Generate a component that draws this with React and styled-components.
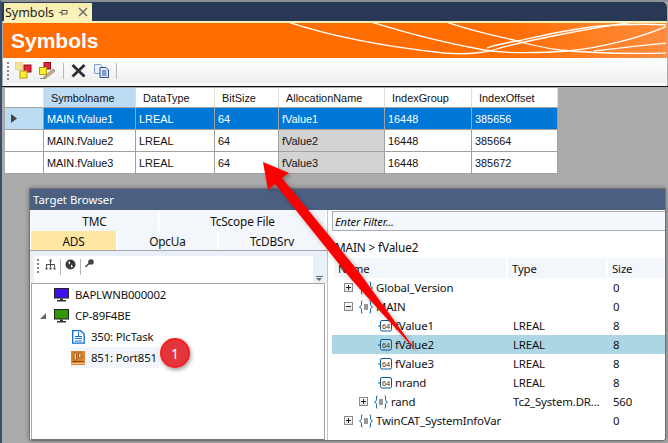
import styled, { createGlobalStyle } from "styled-components";

const GlobalStyle = createGlobalStyle`
  html, body {
    margin: 0;
    padding: 0;
    overflow: hidden;
    background: #ababab;
  }
`;

const Page = styled.div`
  position: relative;
  width: 668px;
  height: 443px;
  overflow: hidden;
  display: flex;
  flex-direction: column;
  box-sizing: border-box;
  background: #ababab;
  border-top: 2px solid #8b8f96;
  border-left: 2px solid #3c4c6c;
`;

const TitleStrip = styled.div`
  height: 19px;
  margin-right: 1px;
  display: flex;
  align-items: flex-end;
  padding-left: 2px;
  background: #293955;
  border-top-right-radius: 5px;
`;

const DocTab = styled.div`
  width: 88px;
  height: 18px;
  box-sizing: border-box;
  padding: 0 4px 0 1px;
  display: flex;
  align-items: center;
  background: linear-gradient(#f6eeb0, #fdf5bd);
  font: 12.5px "Noto Sans", sans-serif;
  color: #222;
`;

const TabName = styled.span`
  flex: 1;
  letter-spacing: -0.05px;
`;

const Banner = styled.div`
  position: relative;
  height: 35px;
  margin-right: 1px;
  margin-left: 1px;
  border-top: 2px solid #fdf3b4;
  display: flex;
  align-items: center;
  padding-left: 8px;
  background: linear-gradient(90deg, #ff6c00 0%, #ff6c00 75%, #ff8d3e 100%);
`;

const BannerTitle = styled.h1`
  margin: 0;
  font: bold 21px "Liberation Sans", sans-serif;
  color: #fff;
`;

const WaveArt = styled.svg`
  position: absolute;
  left: 0;
  top: 0;
`;

const Toolbar = styled.div`
  height: 25px;
  margin: 0 1px;
  padding-left: 4px;
  display: flex;
  align-items: center;
  background: linear-gradient(#fff, #efefef);
  border-bottom: 3px solid #f8f8f8;
`;

const Grip = styled.div`
  width: 2px;
  height: ${(p) => p.$h || 18}px;
  margin-right: ${(p) => p.$gap || 6}px;
  background: repeating-linear-gradient(#888 0 2px, transparent 2px 4px);
`;

const ToolSep = styled.div`
  width: 1px;
  height: 16px;
  margin: 0 ${(p) => p.$gap || 6}px;
  background: #b8b8b8;
`;

const ToolIcon = styled.svg`
  display: block;
  flex: none;
  margin-right: ${(p) => p.$gap || 0}px;
`;

const WorkArea = styled.div`
  flex: 1;
  min-height: 0;
  display: flex;
  flex-direction: column;
  align-items: flex-start;
  padding-top: 1px;
  padding-left: 3px;
  border-top: 1px solid #111;
  background: #ababab;
`;

const SymbolGrid = styled.div`
  display: grid;
  grid-template-columns: 39px 92px 79px 64px 106px 87px 86px;
  grid-template-rows: 20px repeat(3, 22px);
  font: 10.9px "Liberation Sans", sans-serif;
  background: #fff;
`;

const GridCell = styled.div`
  display: flex;
  align-items: center;
  box-sizing: border-box;
  padding-left: 3px;
  overflow: hidden;
  white-space: nowrap;
  border-right: 1px solid #a0a0a0;
  border-bottom: 1px solid #a0a0a0;
  color: ${(p) => (p.$selected ? "#fff" : "#111")};
  background: ${(p) =>
    p.$selected ? "#0078d7" : p.$computed ? "#d3d3d3" : "#fff"};
`;

const HeadCell = styled.div`
  display: flex;
  align-items: center;
  box-sizing: border-box;
  padding-left: 7px;
  white-space: nowrap;
  color: #111;
  border-right: 1px solid #dcdcdc;
  border-bottom: 1px solid #a0a0a0;
  background: ${(p) => (p.$active ? "#bcdcf4" : "#fff")};
`;

const RowHead = styled.div`
  display: flex;
  align-items: center;
  padding-left: 6px;
  box-sizing: border-box;
  border-right: 1px solid #a0a0a0;
  border-bottom: 1px solid #a0a0a0;
  background: ${(p) => (p.$current ? "#bcdcf4" : "#fff")};
`;

const GridRow = styled.div`
  display: contents;
`;

const BrowserWindow = styled.section`
  flex: 1;
  min-height: 0;
  align-self: stretch;
  margin: 14px 2px 2px 24px;
  display: flex;
  flex-direction: column;
  box-sizing: border-box;
  background: #fff;
  border: 1px solid #6f7378;
  border-radius: 0 0 3px 3px;
  box-shadow: 0 0 5px rgba(0, 0, 0, 0.35);
  font: 11.4px "Noto Sans", sans-serif;
  letter-spacing: -0.15px;
  color: #111;
`;

const BrowserTitle = styled.div`
  height: 21px;
  flex: none;
  display: flex;
  align-items: center;
  padding-left: 3px;
  padding-bottom: 1px;
  box-sizing: border-box;
  background: #4b5f81;
  color: #fff;
  font-size: 11.4px;
  letter-spacing: 0;
`;

const Panes = styled.div`
  flex: 1;
  min-height: 0;
  display: flex;
`;

const LeftPane = styled.div`
  width: 298px;
  flex: none;
  display: flex;
  flex-direction: column;
  box-sizing: border-box;
  border-right: 1px solid #c4c4c4;
`;

const TabRow = styled.div`
  height: ${(p) => p.$h}px;
  flex: none;
  display: grid;
  grid-template-columns: ${(p) => p.$cols};
  column-gap: 2px;
  padding-left: 1px;
`;

const TargetTab = styled.div`
  display: flex;
  align-items: center;
  justify-content: center;
  background: ${(p) => (p.$active ? "#ffe6a2" : "#f3f7fb")};
  font-size: 11.8px;
`;

const TreeFrame = styled.div`
  flex: 1;
  min-height: 0;
  display: flex;
  flex-direction: column;
  border-top: 1px solid #a6a6a6;
`;

const TreeToolArea = styled.div`
  height: 32px;
  flex: none;
  box-sizing: border-box;
  display: flex;
  align-items: flex-start;
  padding: 5px 0 0 4px;
  background: #eaf0f7;
`;

const TreeToolbar = styled.div`
  width: 279px;
  height: 27px;
  box-sizing: border-box;
  padding: 3px 0 3px 3px;
  display: flex;
  align-items: flex-start;
  background: #fff;
  border-radius: 3px 3px 0 0;
`;

const OverflowMark = styled.div`
  margin: 20px 0 0 3px;
  width: 7px;
  height: 4px;
  border-top: 1px solid #666;
  position: relative;
  &::after {
    content: "";
    position: absolute;
    left: 0;
    top: 1px;
    border-left: 3.5px solid transparent;
    border-right: 3.5px solid transparent;
    border-top: 3.5px solid #666;
  }
`;

const TreeBody = styled.div`
  flex: 1;
  min-height: 0;
  margin: 0 2px 0 1px;
  background: #fff;
  border: 1px solid #a6a6a6;
  border-bottom-color: #777;
`;

const TreeRow = styled.div`
  height: 21px;
  width: ${(p) => (p.$selected ? "88px" : "auto")};
  margin-left: ${(p) => p.$indent}px;
  display: flex;
  align-items: center;
  gap: ${(p) => p.$gap ?? 6}px;
  white-space: nowrap;
  background: ${(p) => (p.$selected ? "#f2f6fb" : "transparent")};
`;

const ExpandMark = styled.div`
  width: 0;
  height: 0;
  margin-right: 8px;
  border-left: 6px solid transparent;
  border-bottom: 6px solid #666;
`;

const RightPane = styled.div`
  flex: 1;
  min-width: 0;
  display: flex;
  flex-direction: column;
  padding-left: 4px;
  overflow: hidden;
`;

const FilterInput = styled.div`
  height: 20px;
  flex: none;
  margin-top: 1px;
  box-sizing: border-box;
  display: flex;
  align-items: center;
  padding-left: 2px;
  background: #f5f9fd;
  border: 1px solid #a8adb3;
  border-right: none;
  font-style: italic;
  font-size: 11.2px;
`;

const Breadcrumb = styled.div`
  height: 27px;
  flex: none;
  box-sizing: border-box;
  display: flex;
  align-items: center;
  padding: 5px 0 0 3px;
  font-size: 11.8px;
`;

const VarHead = styled.div`
  display: grid;
  grid-template-columns: 172px 98px 1fr;
  column-gap: 2px;
  height: 20px;
  flex: none;
  margin-left: 2px;
`;

const VarHeadCell = styled.div`
  display: flex;
  align-items: center;
  padding-left: 4px;
  background: #f3f7fb;
`;

const VarRow = styled.div`
  display: grid;
  grid-template-columns: 174px 100px 1fr;
  height: 19px;
  flex: none;
  align-items: center;
  background: ${(p) => (p.$selected ? "#add6e5" : "transparent")};
`;

const VarName = styled.div`
  display: flex;
  align-items: center;
  gap: 3px;
  overflow: hidden;
  white-space: nowrap;
  padding-left: ${(p) => p.$indent}px;
`;

const VarCell = styled.div`
  padding-left: 7px;
  white-space: nowrap;
  overflow: hidden;
`;

const PlusBox = styled.div`
  width: 9px;
  height: 9px;
  flex: none;
  margin-right: 3px;
  box-sizing: border-box;
  position: relative;
  border: 1px solid #8a8a8a;
  background: linear-gradient(#fff, #e2e2e2);
  &::before {
    content: "";
    position: absolute;
    left: 1px;
    top: 3px;
    width: 5px;
    height: 1px;
    background: #222;
  }
  &::after {
    content: "";
    display: ${(p) => (p.$open ? "none" : "block")};
    position: absolute;
    left: 3px;
    top: 1px;
    width: 1px;
    height: 5px;
    background: #222;
  }
`;

const Badge = styled.div`
  position: absolute;
  left: 158px;
  top: 336px;
  width: 30px;
  height: 30px;
  box-sizing: border-box;
  display: flex;
  align-items: center;
  justify-content: center;
  border-radius: 50%;
  background: #e2363c;
  border: 2px solid #fa1e22;
  box-shadow: 1px 2px 4px rgba(0, 0, 0, 0.4);
  color: #fff;
  font: 14px "Noto Sans", sans-serif;
`;

const ArrowLayer = styled.svg`
  position: absolute;
  left: -2px;
  top: -2px;
  pointer-events: none;
`;

const columns = [
  "Symbolname",
  "DataType",
  "BitSize",
  "AllocationName",
  "IndexGroup",
  "IndexOffset",
];

const symbols = [
  ["MAIN.fValue1", "LREAL", "64", "fValue1", "16448", "385656"],
  ["MAIN.fValue2", "LREAL", "64", "fValue2", "16448", "385664"],
  ["MAIN.fValue3", "LREAL", "64", "fValue3", "16448", "385672"],
];

function PinIcon() {
  return (
    <ToolIcon width="9" height="9" viewBox="0 0 9 9" fill="none" stroke="#555" $gap={10}>
      <path d="M0 4.500h3M3 1.500v6M3 2.500h5v3.500H3" />
    </ToolIcon>
  );
}

function CloseSmall() {
  return (
    <ToolIcon width="10" height="10" viewBox="0 0 10 10" stroke="#666" strokeWidth="1.400">
      <path d="M1 1l8 8M9 1l-8 8" />
    </ToolIcon>
  );
}

function AddSymbolIcon() {
  return (
    <ToolIcon width="17" height="17" viewBox="0 0 17 17" $gap={7}>
      <rect x="0.500" y="0.500" width="7" height="7" fill="#f6e39a" stroke="#d8b850" strokeDasharray="1 1" />
      <rect x="9" y="3" width="7" height="7" fill="#e8213c" stroke="#8c1020" />
      <rect x="5" y="9" width="7" height="7" fill="#fdee2c" stroke="#b59a10" />
    </ToolIcon>
  );
}

function EditSymbolIcon() {
  return (
    <ToolIcon width="17" height="17" viewBox="0 0 17 17">
      <rect x="5" y="0.500" width="6.500" height="6.500" fill="#e8213c" stroke="#8c1020" />
      <rect x="0.500" y="5.500" width="7" height="7" fill="#fdee2c" stroke="#b59a10" />
      <path d="M5 15l9-8 2 2-9 7-3 1z" fill="#c9b48c" stroke="#7d7058" strokeWidth="0.800" />
      <path d="M1 16.500h5" stroke="#888" />
    </ToolIcon>
  );
}

function DeleteIcon() {
  return (
    <ToolIcon width="15" height="15" viewBox="0 0 15 15" stroke="#2c3034" strokeWidth="2.800" $gap={8}>
      <path d="M1.500 2l12 11.500M13.500 2l-12 11.500" />
    </ToolIcon>
  );
}

function CopyIcon() {
  return (
    <ToolIcon width="15" height="14" viewBox="0 0 15 14">
      <path d="M.5.500h6l2 2v7h-8z" fill="#e8f0fb" stroke="#7f9fd0" />
      <path d="M6 3.500h6l2.500 2.500v7.500H6z" fill="#dfe9f8" stroke="#2c4f96" />
      <path d="M8 7h4.500M8 9h4.500M8 11h4.500" stroke="#2c4f96" />
    </ToolIcon>
  );
}

function TreeIcon() {
  return (
    <ToolIcon width="11" height="11" viewBox="0 0 11 11" stroke="#444" fill="none">
      <path d="M5.500 1v7M1.500 8V5.500h8V8" />
      <path d="M4.500.5h2v2h-2zM.5 8.500h2v2h-2zM4.500 8.500h2v2h-2zM8.500 8.500h2v2h-2z" fill="#444" stroke="none" />
    </ToolIcon>
  );
}

function RefreshIcon() {
  return (
    <ToolIcon width="11" height="11" viewBox="0 0 11 11">
      <circle cx="5.500" cy="5.500" r="5" fill="#3a3a3a" />
      <path d="M3 3.500a3.200 3.200 0 0 1 2-1v3zM8 7.500a3.200 3.200 0 0 1-2 1v-3z" fill="#fff" />
    </ToolIcon>
  );
}

function KeyIcon() {
  return (
    <ToolIcon width="9" height="9" viewBox="0 0 9 9">
      <circle cx="6" cy="3" r="2.800" fill="#444" />
      <path d="M4.500 4L.5 8" stroke="#444" strokeWidth="1.400" />
    </ToolIcon>
  );
}

function MonitorIcon({ screen }) {
  return (
    <ToolIcon width="15" height="14" viewBox="0 0 15 14" $gap={6}>
      <rect x="0.500" y="0.500" width="14" height="9.500" fill={screen} stroke="#222" />
      <path d="M6 10.500h3v1.500H6z" fill="#333" />
      <path d="M3 12h9v1.500H3z" fill="#333" />
    </ToolIcon>
  );
}

function TaskIcon() {
  return (
    <ToolIcon width="13" height="14" viewBox="0 0 13 14" fill="none" stroke="#0a6fd0">
      <path d="M.7.700h8l3.500 3.500v9H.7z" strokeWidth="1.300" />
      <path d="M3 6.500h7M3 8.500h7M3 11h7M6.500 2v4" />
    </ToolIcon>
  );
}

function PortIcon() {
  return (
    <ToolIcon width="14" height="14" viewBox="0 0 14 14">
      <rect width="14" height="14" fill="#e0812c" />
      <path d="M3 2h2.500v7H3zM7.500 2H10v5H7.500z" fill="#f6c48c" stroke="#8a4a10" strokeWidth="0.700" />
      <path d="M1.500 10.500h11" stroke="#8a4a10" />
      <path d="M0 12.500h14" stroke="#f6c48c" />
    </ToolIcon>
  );
}

function BlockIcon() {
  return (
    <ToolIcon width="14" height="14" viewBox="0 0 14 14" fill="none" stroke="#0b5a9a">
      <path d="M3.500.8C2 .8 2.500 2 2.500 4.500 2.500 6.200 1 6.500.5 7c.5.5 2 .8 2 2.500 0 2.500-.5 3.700 1 3.700M10.500.8c1.500 0 1 1.200 1 3.700 0 1.700 1.500 2 2 2.500-.5.5-2 .8-2 2.500 0 2.500.5 3.700-1 3.700" />
      <path d="M5 5h4M5 7h4M5 9h4" stroke="#333" />
    </ToolIcon>
  );
}

function RealIcon() {
  return (
    <ToolIcon width="14" height="14" viewBox="0 0 14 14">
      <rect x="2.500" y="1.500" width="11" height="10.500" rx="1.500" fill="none" stroke="#0b5a9a" />
      <path d="M0 7h2.500" stroke="#0b5a9a" />
      <text x="8" y="9.500" fontSize="7.500" textAnchor="middle" fontFamily="Liberation Sans" fill="#333">64</text>
    </ToolIcon>
  );
}

function VarTreeRow({ name, type, size, depth, kind, open, selected }) {
  const indent = [12, 27, 46][depth];
  return (
    <VarRow $selected={selected}>
      <VarName $indent={indent}>
        {kind !== "real" && <PlusBox $open={open} />}
        {kind === "real" ? <RealIcon /> : <BlockIcon />}
        <span>{name}</span>
      </VarName>
      <VarCell>{type}</VarCell>
      <VarCell>{size}</VarCell>
    </VarRow>
  );
}

export default function App() {
  return (
    <>
      <GlobalStyle />
      <Page>
        <TitleStrip>
          <DocTab>
            <TabName>Symbols</TabName>
            <PinIcon />
            <CloseSmall />
          </DocTab>
        </TitleStrip>
        <Banner>
          <BannerTitle>Symbols</BannerTitle>
          <WaveArt width="663" height="33" viewBox="3 25 663 33" fill="none" stroke="#fff" strokeWidth="1.300">
            <path d="M288 24C330 38 380 48 444 55C470 57 490 54 500 50C530 42 590 30 634 24" />
            <path d="M371 24C400 33 445 45 484 52C510 56 540 55 567 53C600 50 640 40 667 28" />
            <path d="M446 24C470 32 495 38 514 42C530 47 545 50 560 52C590 55 630 56 667 55" />
            <path d="M487 50C495 47 505 45 517 43C545 37 570 31 600 28C625 26 650 26 667 27" />
            <path d="M594 53C620 50 645 47 667 45" />
          </WaveArt>
        </Banner>
        <Toolbar>
          <Grip $gap={6} />
          <AddSymbolIcon />
          <EditSymbolIcon />
          <ToolSep $gap={7} />
          <DeleteIcon />
          <CopyIcon />
          <ToolSep $gap={7} />
        </Toolbar>
        <WorkArea>
          <SymbolGrid>
            <GridRow>
              <HeadCell />
              {columns.map((col, i) => (
                <HeadCell key={col} $active={i === 0}>
                  {col}
                </HeadCell>
              ))}
            </GridRow>
            {symbols.map((row, r) => (
              <GridRow key={row[0]}>
                <RowHead $current={r === 0}>
                  {r === 0 && (
                    <svg width="6" height="9" viewBox="0 0 6 9">
                      <path d="M0 0l6 4.500L0 9z" fill="#444" />
                    </svg>
                  )}
                </RowHead>
                {row.map((val, c) => (
                  <GridCell key={c} $selected={r === 0} $computed={c === 3}>
                    {val}
                  </GridCell>
                ))}
              </GridRow>
            ))}
          </SymbolGrid>
          <BrowserWindow>
            <BrowserTitle>Target Browser</BrowserTitle>
            <Panes>
              <LeftPane>
                <TabRow $h={21} $cols="127px 165px">
                  <TargetTab>TMC</TargetTab>
                  <TargetTab>TcScope File</TargetTab>
                </TabRow>
                <TabRow $h={19} $cols="85px 99px 106px">
                  <TargetTab $active>ADS</TargetTab>
                  <TargetTab>OpcUa</TargetTab>
                  <TargetTab>TcDBSrv</TargetTab>
                </TabRow>
                <TreeFrame>
                  <TreeToolArea>
                    <TreeToolbar>
                      <Grip $h={16} $gap={6} />
                      <TreeIcon />
                      <ToolSep $gap={4} />
                      <RefreshIcon />
                      <ToolSep $gap={4} />
                      <KeyIcon />
                    </TreeToolbar>
                    <OverflowMark />
                  </TreeToolArea>
                  <TreeBody>
                    <TreeRow $indent={22} $gap={0}>
                      <MonitorIcon screen="#3f10ee" />
                      <span>BAPLWNB000002</span>
                    </TreeRow>
                    <TreeRow $indent={8} $gap={0}>
                      <ExpandMark />
                      <MonitorIcon screen="#2f9a06" />
                      <span>CP-89F4BE</span>
                    </TreeRow>
                    <TreeRow $indent={40}>
                      <TaskIcon />
                      <span>350: PlcTask</span>
                    </TreeRow>
                    <TreeRow $indent={39} $selected>
                      <PortIcon />
                      <span>851: Port851</span>
                    </TreeRow>
                  </TreeBody>
                </TreeFrame>
              </LeftPane>
              <RightPane>
                <FilterInput>Enter Filter...</FilterInput>
                <Breadcrumb>MAIN &gt; fValue2</Breadcrumb>
                <VarHead>
                  <VarHeadCell>Name</VarHeadCell>
                  <VarHeadCell>Type</VarHeadCell>
                  <VarHeadCell>Size</VarHeadCell>
                </VarHead>
                <VarTreeRow name="Global_Version" size="0" depth={0} />
                <VarTreeRow name="MAIN" size="0" depth={0} open />
                <VarTreeRow name="fValue1" type="LREAL" size="8" depth={2} kind="real" />
                <VarTreeRow name="fValue2" type="LREAL" size="8" depth={2} kind="real" selected />
                <VarTreeRow name="fValue3" type="LREAL" size="8" depth={2} kind="real" />
                <VarTreeRow name="nrand" type="LREAL" size="8" depth={2} kind="real" />
                <VarTreeRow name="rand" type="Tc2_System.DR..." size="560" depth={1} />
                <VarTreeRow name="TwinCAT_SystemInfoVar" size="0" depth={0} />
              </RightPane>
            </Panes>
          </BrowserWindow>
        </WorkArea>
        <Badge>1</Badge>
        <ArrowLayer width="668" height="443" viewBox="0 0 668 443">
          <defs>
            <filter id="soft" x="-10%" y="-10%" width="130%" height="130%">
              <feDropShadow dx="2" dy="2" stdDeviation="2" floodColor="#000" floodOpacity="0.3" />
            </filter>
          </defs>
          <path
            d="M263 162L289 173L282 178L359 272L417 352L351 279L275 184L268 190Z"
            fill="#fb0000"
            filter="url(#soft)"
          />
        </ArrowLayer>
      </Page>
    </>
  );
}
